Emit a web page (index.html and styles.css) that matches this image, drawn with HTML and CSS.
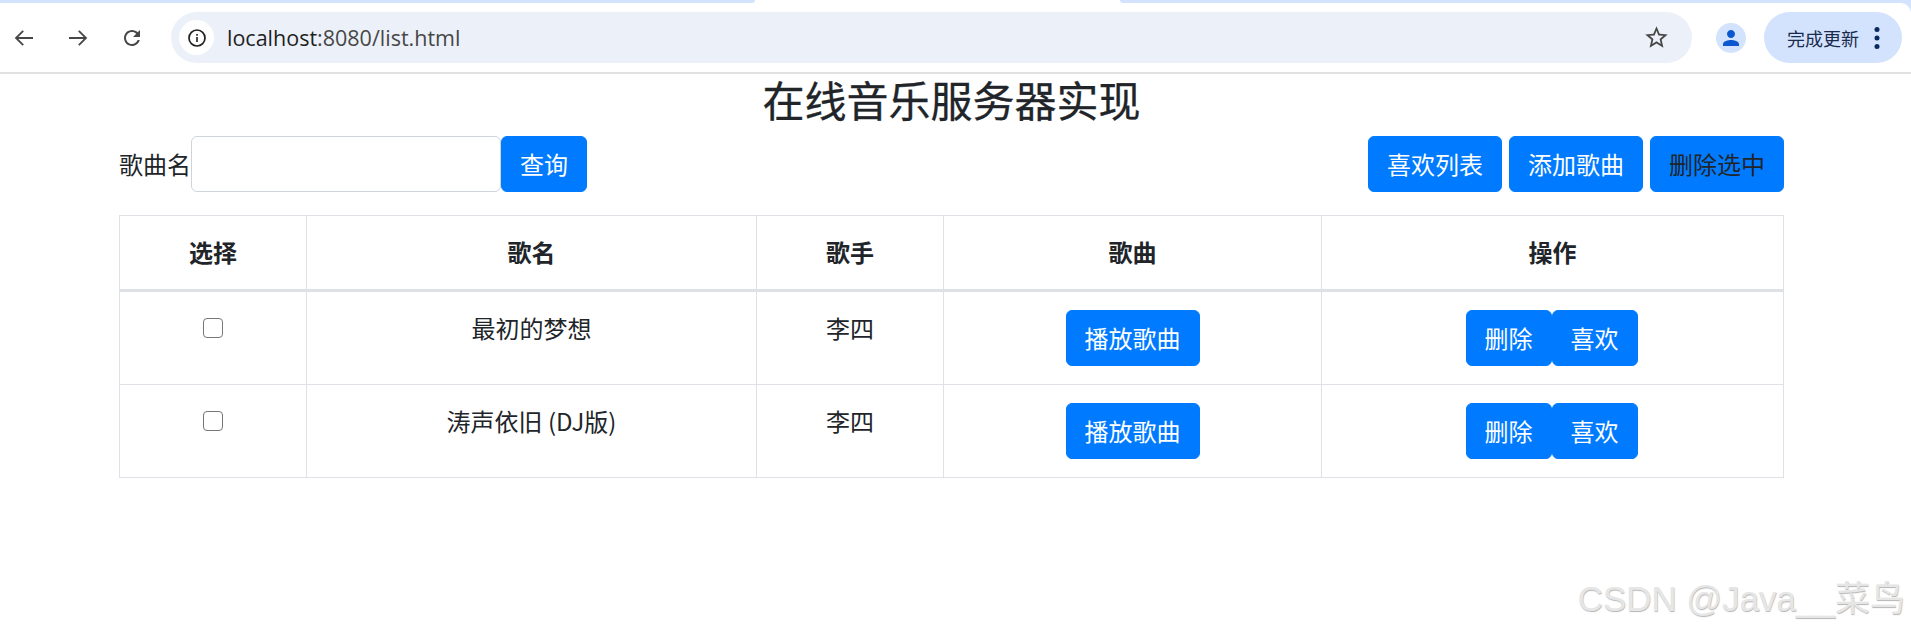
FILE: index.html
```html
<!DOCTYPE html>
<html lang="zh-CN">
<head>
<meta charset="utf-8">
<title>list</title>
<link rel="stylesheet" href="styles.css">
</head>
<body>
<header class="chrome">
  <div class="tabstrip"><div class="strip strip-left"></div><div class="strip strip-right"></div></div>
  <div class="toolbar">
    <span class="nav-icon"><svg width="24" height="24" viewBox="0 0 24 24" fill="none" stroke="#474747" stroke-width="1.8"><path d="M21 12H4M11.2 4.8 4 12l7.2 7.2"/></svg></span>
    <span class="nav-icon"><svg width="24" height="24" viewBox="0 0 24 24" fill="none" stroke="#474747" stroke-width="1.8"><path d="M3 12h17M12.8 4.8 20 12l-7.2 7.2"/></svg></span>
    <span class="nav-icon"><svg width="24" height="24" viewBox="0 0 24 24" fill="#474747"><path d="M17.65 6.35C16.2 4.9 14.21 4 12 4c-4.42 0-7.99 3.58-7.99 8s3.57 8 7.99 8c3.73 0 6.84-2.55 7.73-6h-2.08c-.82 2.33-3.04 4-5.65 4-3.31 0-6-2.69-6-6s2.69-6 6-6c1.66 0 3.14.69 4.22 1.78L13 11h7V4l-2.35 2.35z"/></svg></span>
    <div class="omnibox">
      <span class="site-info"><svg width="20" height="20" viewBox="0 0 20 20" fill="none"><circle cx="10" cy="10" r="8" stroke="#1f1f1f" stroke-width="1.7"/><rect x="9.2" y="9" width="1.6" height="5" fill="#1f1f1f"/><rect x="9.2" y="6" width="1.6" height="1.7" fill="#1f1f1f"/></svg></span>
      <span class="url"><span class="host">localhost</span>:8080/list.html</span>
      <svg class="star" width="27" height="27" viewBox="0 0 24 24" fill="#474747"><path d="M22 9.24l-7.19-.62L12 2 9.19 8.63 2 9.24l5.46 4.73L5.82 21 12 17.27 18.18 21l-1.63-7.03L22 9.24zM12 15.4l-3.76 2.27 1-4.28-3.32-2.88 4.38-.38L12 6.1l1.71 4.04 4.38.38-3.32 2.88 1 4.28L12 15.4z"/></svg>
    </div>
    <span class="avatar"><svg width="24" height="24" viewBox="0 0 24 24" fill="#0b57d0"><path d="M12 12c2.21 0 4-1.79 4-4s-1.79-4-4-4-4 1.79-4 4 1.79 4 4 4zm0 2c-2.67 0-8 1.34-8 4v2h16v-2c0-2.66-5.33-4-8-4z"/></svg></span>
    <div class="update">
      <span class="update-text">完成更新</span>
      <svg width="6" height="24" viewBox="0 0 6 24" fill="#0a2a5e"><circle cx="3" cy="3.5" r="2.5"/><circle cx="3" cy="12" r="2.5"/><circle cx="3" cy="20.5" r="2.5"/></svg>
    </div>
  </div>
</header>

<main class="page">
  <h3 class="title">在线音乐服务器实现</h3>
  <div class="controls">
    <form class="search">
      <label class="search-label">歌曲名</label>
      <input class="search-input" type="text">
      <button class="btn" type="button">查询</button>
    </form>
    <div class="actions">
      <button class="btn" type="button">喜欢列表</button>
      <button class="btn" type="button">添加歌曲</button>
      <button class="btn btn-dark-text" type="button">删除选中</button>
    </div>
  </div>
  <table class="songs">
    <colgroup>
      <col class="col-select"><col class="col-name"><col class="col-singer"><col class="col-song"><col class="col-op">
    </colgroup>
    <thead>
      <tr><th>选择</th><th>歌名</th><th>歌手</th><th>歌曲</th><th>操作</th></tr>
    </thead>
    <tbody>
      <tr>
        <td><input class="check" type="checkbox"></td>
        <td>最初的梦想</td>
        <td>李四</td>
        <td><div class="cell-btns"><button class="btn" type="button">播放歌曲</button></div></td>
        <td class="cell-op"><div class="cell-btns"><button class="btn" type="button">删除</button><button class="btn" type="button">喜欢</button></div></td>
      </tr>
      <tr>
        <td><input class="check" type="checkbox"></td>
        <td>涛声依旧 (DJ版)</td>
        <td>李四</td>
        <td><div class="cell-btns"><button class="btn" type="button">播放歌曲</button></div></td>
        <td class="cell-op"><div class="cell-btns"><button class="btn" type="button">删除</button><button class="btn" type="button">喜欢</button></div></td>
      </tr>
    </tbody>
  </table>
</main>
<div class="watermark">CSDN @Java__菜鸟</div>
</body>
</html>
```
FILE: styles.css
```css
* { box-sizing: border-box; }
html, body { margin: 0; height: 100%; overflow: hidden; }
body {
  background: #fff;
  color: #212529;
  font-family: "Noto Sans CJK SC", "Noto Sans", sans-serif;
  font-size: 24px;
  line-height: 36px;
  position: relative;
}

/* browser chrome */
.chrome { background: #d3e3fd; }
.tabstrip { height: 3px; background: #fff; display: flex; justify-content: space-between; }
.strip { height: 3px; background: #d3e3fd; }
.strip-left { width: 755px; border-bottom-right-radius: 3px; }
.strip-right { width: 791px; border-bottom-left-radius: 3px; }
.toolbar {
  height: 71px;
  display: flex;
  align-items: flex-start;
  padding: 9px 9px 0;
  background: #fff;
  border-bottom: 2px solid #e1e1e1;
  border-top-right-radius: 10px;
}
.nav-icon {
  width: 30px;
  height: 51px;
  margin-right: 24px;
  display: flex;
  align-items: center;
  justify-content: center;
}
.omnibox {
  flex: 1;
  height: 51px;
  padding: 0 22px 0 8px;
  background: #ecf1f9;
  border-radius: 26px;
  display: flex;
  align-items: center;
}
.site-info {
  width: 35px;
  height: 35px;
  margin-right: 13px;
  border-radius: 50%;
  background: #fff;
  display: flex;
  align-items: center;
  justify-content: center;
}
.url {
  flex: 1;
  font-family: "Open Sans", "Noto Sans", sans-serif;
  font-size: 21.5px;
  line-height: 26px;
  color: #474747;
}
.host { color: #1f1f1f; }
.avatar {
  width: 30px;
  height: 30px;
  margin: 11px 18px 0 24px;
  border-radius: 50%;
  background: #d3e3fd;
  display: flex;
  align-items: center;
  justify-content: center;
}
.update {
  width: 138px;
  height: 51px;
  padding-left: 23px;
  border-radius: 26px;
  background: #d3e3fd;
  display: flex;
  align-items: center;
  gap: 15px;
}
.update-text { font-size: 18px; line-height: 24px; color: #1a2b4d; }

/* page */
.page { margin-left: 119px; width: 1665px; }
.title {
  margin: 0 0 12px;
  font-size: 42px;
  line-height: 50px;
  font-weight: 400;
  -webkit-text-stroke: 0.3px #212529;
  text-align: center;
}
.controls {
  display: flex;
  justify-content: space-between;
  margin-bottom: 23px;
}
.search { display: flex; align-items: center; margin: 0; }
.search-label { width: 72px; }
.search-input {
  width: 310px;
  height: 56px;
  padding: 9px 18px;
  background: #fff;
  border: 1.5px solid #ced4da;
  border-radius: 6px;
  outline: none;
}
.actions { display: flex; gap: 7px; }
.btn {
  height: 56px;
  padding: 9px 18px;
  background: #007bff;
  border: 1px solid #007bff;
  border-radius: 6px;
  color: #fff;
  font: inherit;
  cursor: pointer;
}
.btn-dark-text { color: #212529; }

/* table */
.songs {
  width: 1664px;
  table-layout: fixed;
  border-collapse: collapse;
}
.col-select { width: 187px; }
.col-name { width: 450px; }
.col-singer { width: 187px; }
.col-song { width: 378px; }
.col-op { width: 462px; }
.songs th, .songs td {
  padding: 18px;
  border: 1px solid #dee2e6;
  text-align: center;
  vertical-align: top;
}
.songs th { font-weight: 700; padding-bottom: 19px; border-bottom: 3px solid #dee2e6; }
.songs .cell-op { padding-right: 20px; }
.cell-btns { display: flex; justify-content: center; }
.check {
  appearance: none;
  display: block;
  width: 20px;
  height: 20px;
  margin: 8px auto 0;
  background: #fff;
  border: 1.5px solid #767676;
  border-radius: 4px;
}

/* overlay watermark */
.watermark {
  position: absolute;
  right: 6px;
  top: 572px;
  font-family: "Liberation Sans", "Noto Sans CJK SC", sans-serif;
  font-size: 35px;
  line-height: 54px;
  color: #e6e6e6;
  text-shadow: 0.5px 0.5px 1px #b5b5b5;
}
```
